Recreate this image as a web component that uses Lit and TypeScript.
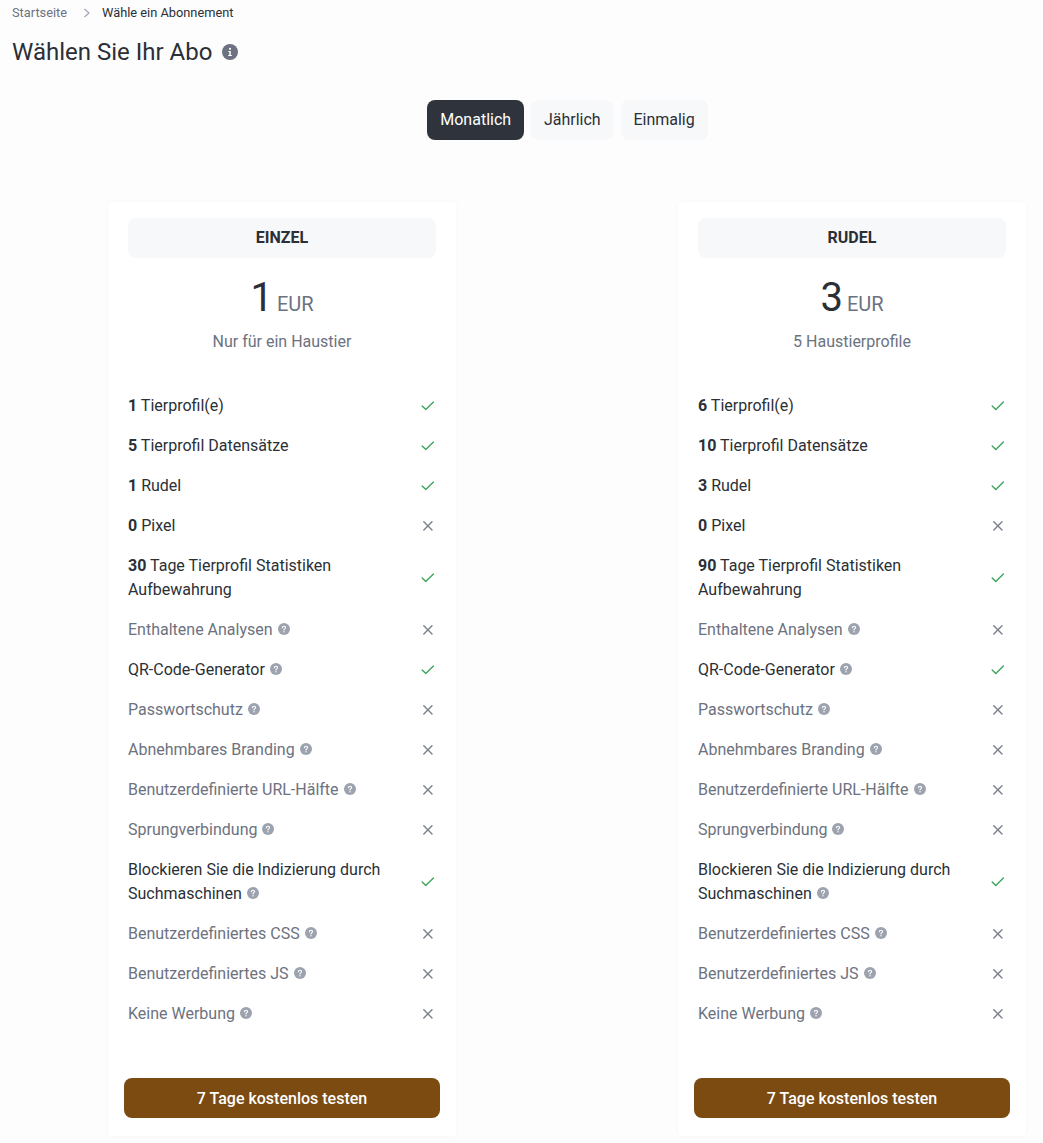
import { LitElement, html, css, svg } from "lit";
import { customElement } from "lit/decorators.js";

type Feat = { b?: string; t: string; ok: boolean; help?: boolean; dark?: boolean };

const feats = (a: string[]): Feat[] => [
  { b: a[0], t: "Tierprofil(e)", ok: true, dark: true },
  { b: a[1], t: "Tierprofil Datensätze", ok: true, dark: true },
  { b: a[2], t: "Rudel", ok: true, dark: true },
  { b: "0", t: "Pixel", ok: false, dark: true },
  { b: a[3], t: "Tage Tierprofil Statistiken Aufbewahrung", ok: true, dark: true },
  { t: "Enthaltene Analysen", ok: false, help: true },
  { t: "QR-Code-Generator", ok: true, help: true, dark: true },
  { t: "Passwortschutz", ok: false, help: true },
  { t: "Abnehmbares Branding", ok: false, help: true },
  { t: "Benutzerdefinierte URL-Hälfte", ok: false, help: true },
  { t: "Sprungverbindung", ok: false, help: true },
  { t: "Blockieren Sie die Indizierung durch Suchmaschinen", ok: true, help: true, dark: true },
  { t: "Benutzerdefiniertes CSS", ok: false, help: true },
  { t: "Benutzerdefiniertes JS", ok: false, help: true },
  { t: "Keine Werbung", ok: false, help: true },
];

const plans = [
  { name: "EINZEL", price: "1", sub: "Nur für ein Haustier", f: feats(["1", "5", "1", "30"]) },
  { name: "RUDEL", price: "3", sub: "5 Haustierprofile", f: feats(["6", "10", "3", "90"]) },
];

const check = svg`<path d="M2.2 8 L5.8 11.6 L13.4 4" fill="none" stroke="#3fa45f" stroke-width="1.4" stroke-linecap="round" stroke-linejoin="round"/>`;
const cross = svg`<path d="M3.8 3.8 L12 12 M12 3.8 L3.8 12" fill="none" stroke="#7b818c" stroke-width="1.4" stroke-linecap="round"/>`;

@customElement("app-root")
export class AppRoot extends LitElement {
  static styles = css`
    :host {
      display: block;
      height: 1143px;
      overflow: hidden;
      background: #fdfdfe;
      font-family: Roboto, "Liberation Sans", sans-serif;
      color: #2b2f36;
      font-size: 16px;
    }
    .page { padding: 0 12px; }
    .crumbs {
      display: flex;
      align-items: center;
      height: 25px;
      font-size: 12.8px;
      color: #6c7280;
    }
    .crumbs svg { margin: 0 11px 0 16px; }
    .crumbs .cur { color: #2b2f36; }
    .title {
      display: flex;
      align-items: center;
      gap: 10px;
      height: 30px;
      margin: 12px 0 0;
      font-size: 24px;
      font-weight: 400;
      color: #2b2f36;
    }
    .info {
      width: 16px;
      height: 16px;
      flex: none;
    }
    .tabs {
      display: flex;
      justify-content: center;
      gap: 7.2px;
      margin: 33px 0 0 92px;
    }
    .tab {
      box-sizing: border-box;
      height: 40px;
      padding: 0 12.8px 2px;
      display: flex;
      align-items: center;
      border-radius: 8px;
      background: #f7f8fa;
      color: #2b2f36;
      font-weight: 400;
    }
    .tab.on { background: #2f343c; color: #fff; }
    .plans {
      display: flex;
      justify-content: space-between;
      margin: 62px 5px 0 96px;
    }
    .card {
      width: 348px;
      box-sizing: border-box;
      height: 934px;
      padding: 16px 16px 0;
      background: #fff;
      box-shadow: 0 0 4px rgba(30, 40, 60, 0.03);
      border-radius: 4px;
      display: flex;
      flex-direction: column;
    }
    .head {
      box-sizing: border-box;
      margin: 0 4px;
      height: 40px;
      padding-bottom: 2px;
      display: flex;
      align-items: center;
      justify-content: center;
      background: #f7f8fa;
      border-radius: 8px;
      font-weight: 700;
      color: #2b2f36;
    }
    .price {
      display: flex;
      justify-content: center;
      align-items: baseline;
      gap: 4px;
      margin-top: 18px;
      height: 44px;
      line-height: 44px;
    }
    .price b { font-size: 40px; font-weight: 400; }
    .price span { font-size: 20px; color: #6c7280; }
    .sub {
      text-align: center;
      color: #6c7280;
      margin-top: 10px;
      line-height: 24px;
    }
    .list { margin: 40px 4px 0; }
    .row {
      display: flex;
      justify-content: space-between;
      align-items: center;
      gap: 24px;
      margin-bottom: 16px;
      line-height: 24px;
      color: #6c7280;
    }
    .row.dark { color: #2b2f36; }
    .row b { font-weight: 700; }
    .row .ic { flex: none; width: 16px; height: 16px; }
    .help {
      display: inline-block;
      width: 12px;
      height: 12px;
      margin-left: 5px;
      vertical-align: 0;
    }
    .btn {
      margin-top: auto;
      margin-bottom: 18px;
      height: 40px;
      display: flex;
      align-items: center;
      justify-content: center;
      background: #7b4b12;
      color: #fff;
      font-weight: 500;
      border-radius: 8px;
    }
  `;

  private help() {
    return html`<svg class="help" viewBox="0 0 12 12">
      <circle cx="6" cy="6" r="6" fill="#9ca3af"/>
      <path d="M4.4 4.8 C4.4 3.8 5.1 3.3 6 3.3 C6.9 3.3 7.6 3.8 7.6 4.6 C7.6 5.6 6 5.7 6 6.9" fill="none" stroke="#fff" stroke-width="1.1" stroke-linecap="round"/>
      <circle cx="6" cy="8.7" r="0.7" fill="#fff"/>
    </svg>`;
  }

  render() {
    return html`<div class="page">
      <div class="crumbs">
        <span>Startseite</span>
        <svg width="8" height="10" viewBox="0 0 8 10"><path d="M1.5 1 L6 5 L1.5 9" fill="none" stroke="#9ca3af" stroke-width="1.1"/></svg>
        <span class="cur">Wähle ein Abonnement</span>
      </div>
      <h1 class="title">
        <span>Wählen Sie Ihr Abo</span>
        <svg class="info" viewBox="0 0 16 16">
          <circle cx="8" cy="8" r="8" fill="#6c7280"/>
          <circle cx="8" cy="4.8" r="1.1" fill="#fff"/>
          <path d="M6.4 7 H8.8 V11 H9.8 V12 H6.2 V11 H7.3 V8 H6.4 Z" fill="#fff"/>
        </svg>
      </h1>
      <div class="tabs">
        <div class="tab on">Monatlich</div>
        <div class="tab">Jährlich</div>
        <div class="tab">Einmalig</div>
      </div>
      <div class="plans">
        ${plans.map(
          (p) => html`<div class="card">
            <div class="head">${p.name}</div>
            <div class="price"><b>${p.price}</b><span>EUR</span></div>
            <div class="sub">${p.sub}</div>
            <div class="list">
              ${p.f.map(
                (f) => html`<div class="row ${f.dark ? "dark" : ""}">
                  <div>${f.b ? html`<b>${f.b}</b> ` : ""}${f.t}${f.help ? this.help() : ""}</div>
                  <svg class="ic" viewBox="0 0 16 16">${f.ok ? check : cross}</svg>
                </div>`
              )}
            </div>
            <div class="btn">7 Tage kostenlos testen</div>
          </div>`
        )}
      </div>
    </div>`;
  }
}
